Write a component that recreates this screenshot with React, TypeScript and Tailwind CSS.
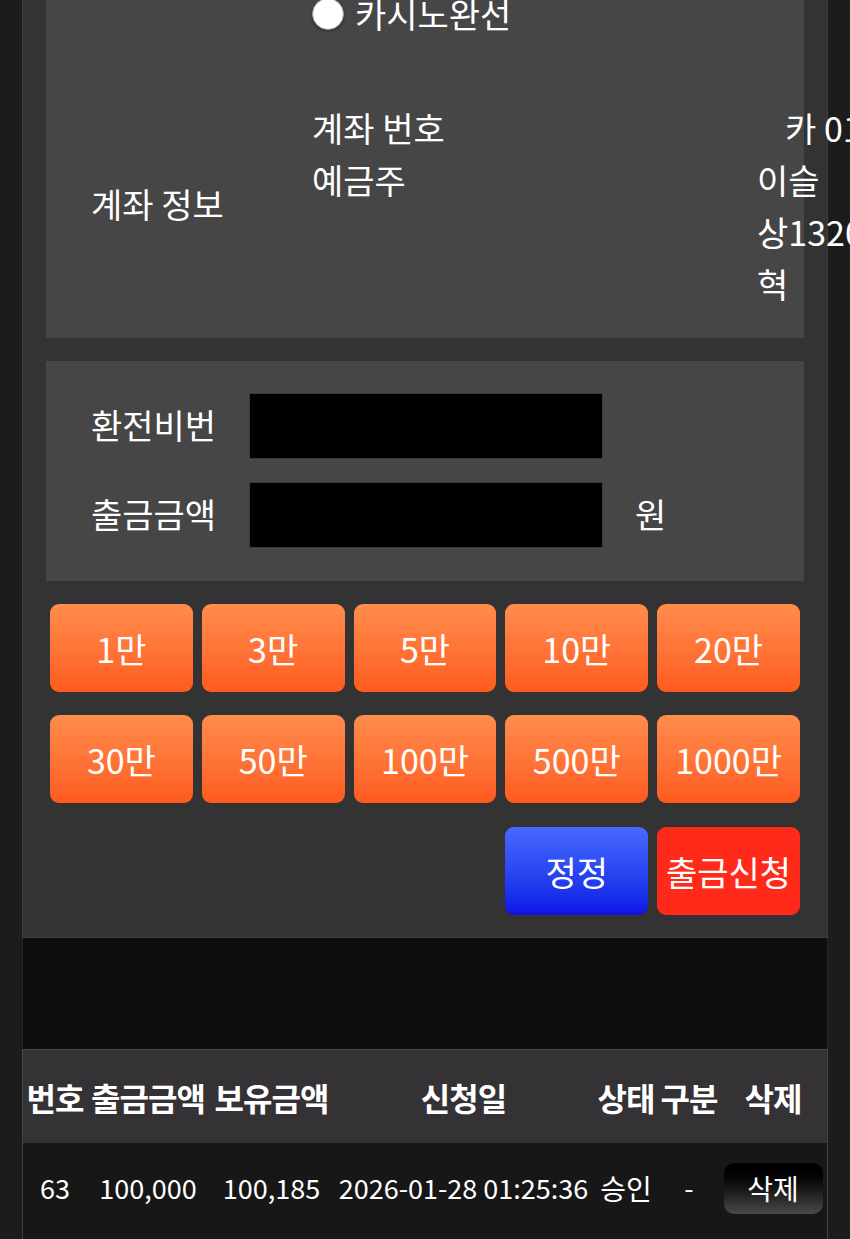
import React from 'react';

const amounts = ['1만', '3만', '5만', '10만', '20만', '30만', '50만', '100만', '500만', '1000만'];

const cols = ['w-[64px]', 'w-[122px]', 'w-[125px]', 'w-[259px]', 'w-[66px]', 'w-[60px]', 'w-[108px]'];

const App: React.FC = () => {
  return (
    <div className="h-[1239px] overflow-hidden bg-[#1c1c1c] px-[22px] font-['Noto_Sans_CJK_KR','Noto_Sans',sans-serif] text-white">
      {/* Withdraw form */}
      <div className="mt-[-40px] border-x border-b border-[#3f3f3f] bg-[#333333] px-[23px] pb-[22px]">
        {/* Account info */}
        <div className="bg-[#464646] pt-[28px] pb-[28px] pl-[45px] text-[34px] leading-[52px]">
          <div className="grid grid-cols-[221px_445px_1fr]">
            <div />
            <label className="flex items-center gap-[11px]">
              <span className="block h-[32px] w-[32px] shrink-0 rounded-full border border-[#9a9a9a] bg-white shadow-[0_1px_2px_rgba(0,0,0,0.5)]" />
              <span>카시노완선</span>
            </label>
            <div />
          </div>
          <div className="mt-[62px] grid grid-cols-[221px_445px_1fr]">
            <div className="flex items-center pb-[4px]">계좌 정보</div>
            <div>
              <div>계좌 번호</div>
              <div>예금주</div>
            </div>
            <div className="whitespace-nowrap">
              <div className="pl-[28px]">카 010</div>
              <div>이슬</div>
              <div>상1320</div>
              <div>혁</div>
            </div>
          </div>
        </div>

        {/* Password / amount */}
        <div className="mt-[23px] flex flex-col gap-[23px] bg-[#464646] pt-[32px] pb-[33px] pl-[45px] text-[34px]">
          <div className="flex items-center">
            <span className="w-[158px] pb-[4px]">환전비번</span>
            <input type="password" className="h-[66px] w-[354px] border border-[#3a3a3a] bg-black outline-none" />
          </div>
          <div className="flex items-center">
            <span className="w-[158px] pb-[4px]">출금금액</span>
            <input type="text" className="h-[66px] w-[354px] border border-[#3a3a3a] bg-black outline-none" />
            <span className="ml-[32px] pb-[4px]">원</span>
          </div>
        </div>

        {/* Quick amount buttons */}
        <div className="mt-[23px] grid grid-cols-5 gap-x-[9px] gap-y-[23px] px-[4px]">
          {amounts.map(a => (
            <button
              key={a}
              className="h-[88px] rounded-[9px] bg-gradient-to-b from-[#ff8c4c] to-[#ff5a1e] text-[34px] text-white"
            >
              {a}
            </button>
          ))}
          <div className="col-span-3" />
          <button className="mt-px h-[88px] rounded-[9px] bg-gradient-to-b from-[#4a68ff] to-[#1010e6] text-[34px] text-white">
            정정
          </button>
          <button className="mt-px h-[88px] rounded-[9px] bg-[#ff2a1a] text-[34px] text-white">
            출금신청
          </button>
        </div>
      </div>

      {/* Spacer band */}
      <div className="h-[111px] border-x border-[#262426] bg-[#0f0e0f]" />

      {/* History table */}
      <div className="border-x border-t border-[#454345] bg-[#181718] pb-[40px]">
        <div className="flex h-[93px] items-center bg-[#343234] text-[32px] font-bold">
          {['번호', '출금금액', '보유금액', '신청일', '상태', '구분', '삭제'].map((h, i) => (
            <div key={h} className={`${cols[i]} whitespace-nowrap text-center tracking-[-1px]`}>{h}</div>
          ))}
        </div>
        <div className="flex h-[90px] items-center text-[27px]">
          <div className={`${cols[0]} text-center`}>63</div>
          <div className={`${cols[1]} text-center`}>100,000</div>
          <div className={`${cols[2]} text-center`}>100,185</div>
          <div className={`${cols[3]} whitespace-nowrap text-center`}>2026-01-28 01:25:36</div>
          <div className={`${cols[4]} text-center text-[28px]`}>승인</div>
          <div className={`${cols[5]} text-center`}>-</div>
          <div className={`${cols[6]} flex justify-center`}>
            <button className="h-[51px] w-[99px] rounded-[10px] bg-gradient-to-b from-[#000000] to-[#4a4a4a] text-[28px] text-white">
              삭제
            </button>
          </div>
        </div>
      </div>
    </div>
  );
};

export default App;
